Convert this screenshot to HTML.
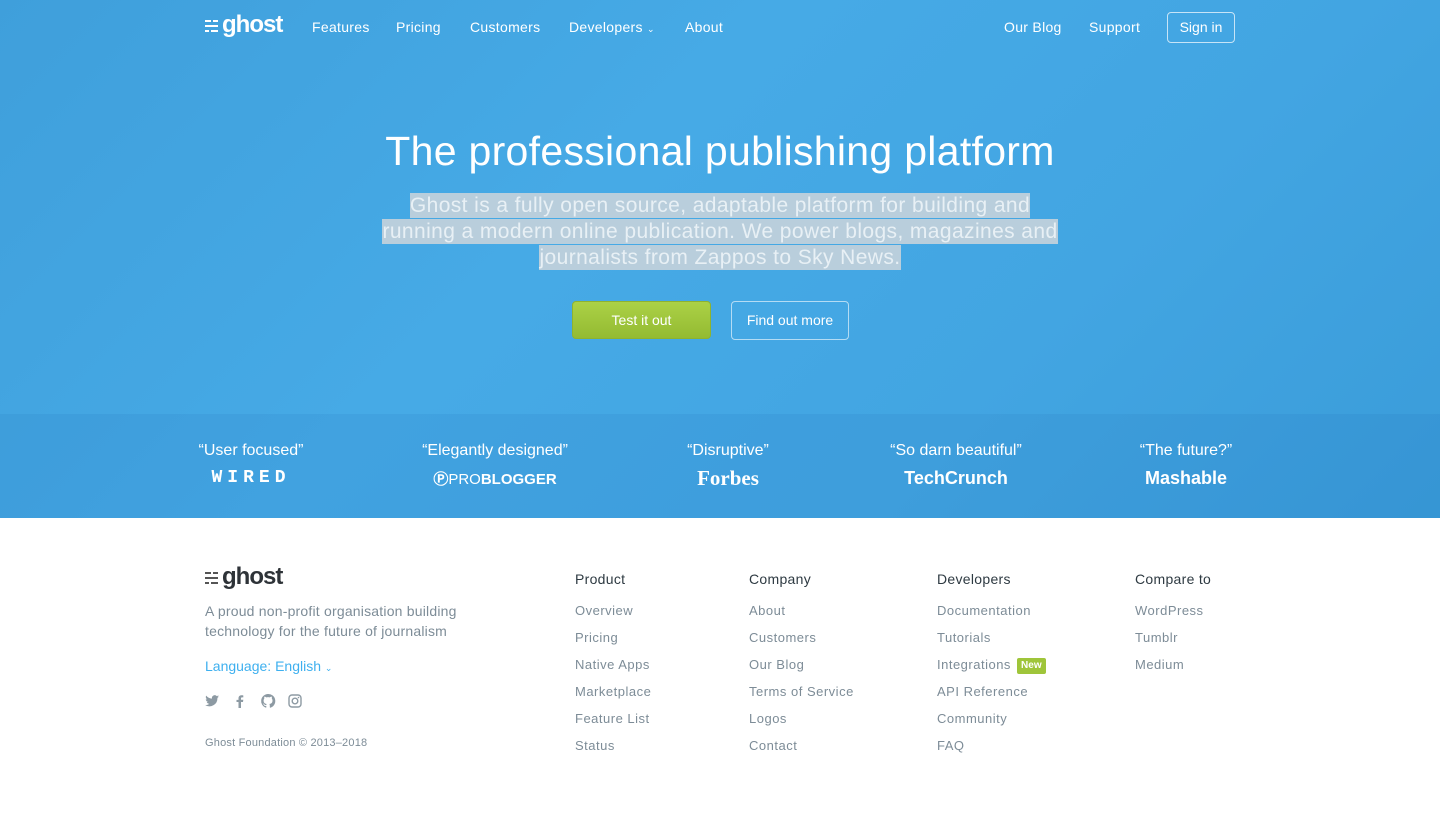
<!DOCTYPE html>
<html><head><meta charset="utf-8"><style>
*{margin:0;padding:0;box-sizing:border-box}
body{width:1440px;height:831px;overflow:hidden;font-family:"Liberation Sans",sans-serif;background:#fff;position:relative}
.hero{position:absolute;left:0;top:0;width:1440px;height:518px;background:linear-gradient(135deg,#3f9fdb 0%,#46aae6 40%,#42a5e2 70%,#3a9cd9 100%)}
.band{position:absolute;left:0;top:414px;width:1440px;height:104px;background:rgba(30,110,180,0.12)}
.a{position:absolute;white-space:nowrap}
.nav{color:#fff;font-size:14px;top:19px;letter-spacing:0.3px}
.logo{font-weight:bold;letter-spacing:-1px}
.bars span{position:absolute;height:2px}
h1{position:absolute;top:128px;left:0;width:1440px;text-align:center;color:#fff;font-weight:normal;font-size:41px;letter-spacing:0.3px}
.sub{position:absolute;left:0;width:1440px;text-align:center;font-size:21px;letter-spacing:0.4px;color:#e8f0f5}
.sub span{background:#b9cedc;padding:1px 0}
.q{color:#fff;font-size:16px;text-align:center;width:200px;top:442px}
.lg{color:#fff;font-weight:bold;text-align:center;width:200px;top:468px;font-size:18px}
.fh{font-size:14px;color:#2e3a42;top:571px;letter-spacing:0.3px}
.fl{font-size:13px;color:#7d8c97;line-height:27px;top:597px;letter-spacing:0.5px}
</style></head><body>
<div class="hero">
<div class="band"></div>
<div class="a bars" style="left:205px;top:20px;width:14px;height:14px">
<span style="left:0;top:0;width:6px;background:#fff"></span><span style="left:8px;top:0;width:5px;background:#fff"></span>
<span style="left:0;top:5px;width:13px;background:#fff"></span>
<span style="left:0;top:10px;width:4px;background:#fff"></span><span style="left:6px;top:10px;width:7px;background:#fff"></span></div>
<div class="a logo" style="left:222px;top:11px;font-size:24px;color:#fff">ghost</div>
<div class="a nav" style="left:312px">Features</div>
<div class="a nav" style="left:396px">Pricing</div>
<div class="a nav" style="left:470px">Customers</div>
<div class="a nav" style="left:569px">Developers <span style="font-size:9px">&#8964;</span></div>
<div class="a nav" style="left:685px">About</div>
<div class="a nav" style="left:1004px">Our Blog</div>
<div class="a nav" style="left:1089px">Support</div>
<div class="a" style="left:1167px;top:12px;width:68px;height:31px;border:1px solid rgba(255,255,255,.7);border-radius:4px;color:#fff;font-size:14px;text-align:center;line-height:29px">Sign in</div>
<h1>The professional publishing platform</h1>
<div class="sub" style="top:194px"><span>Ghost is a fully open source, adaptable platform for building and</span></div>
<div class="sub" style="top:220px"><span>running a modern online publication. We power blogs, magazines and</span></div>
<div class="sub" style="top:246px"><span>journalists from Zappos to Sky News.</span></div>
<div class="a" style="left:572px;top:301px;width:139px;height:38px;border-radius:4px;background:linear-gradient(#abd146,#94bb32);border:1px solid #8fb32e;color:#fff;font-size:14px;text-align:center;line-height:36px">Test it out</div>
<div class="a" style="left:731px;top:301px;width:118px;height:39px;border-radius:4px;border:1px solid rgba(255,255,255,.6);color:#fff;font-size:14px;text-align:center;line-height:37px">Find out more</div>
<div class="a q" style="left:151px">“User focused”</div>
<div class="a lg" style="left:151px;letter-spacing:5px;font-family:'Liberation Mono',monospace">WIRED</div>
<div class="a q" style="left:395px">“Elegantly designed”</div>
<div class="a lg" style="left:395px;font-size:15px">Ⓟ<span style="font-weight:normal">PRO</span>BLOGGER</div>
<div class="a q" style="left:628px">“Disruptive”</div>
<div class="a lg" style="left:628px;font-family:'Liberation Serif',serif;font-size:21px;top:466px">Forbes</div>
<div class="a q" style="left:856px">“So darn beautiful”</div>
<div class="a lg" style="left:856px">TechCrunch</div>
<div class="a q" style="left:1086px">“The future?”</div>
<div class="a lg" style="left:1086px">Mashable</div>
</div>
<div class="a bars" style="left:205px;top:572px;width:14px;height:14px">
<span style="left:0;top:0;width:6px;background:#555"></span><span style="left:8px;top:0;width:5px;background:#555"></span>
<span style="left:0;top:5px;width:13px;background:#555"></span>
<span style="left:0;top:10px;width:4px;background:#555"></span><span style="left:6px;top:10px;width:7px;background:#555"></span></div>
<div class="a logo" style="left:222px;top:563px;font-size:24px;color:#2e3338">ghost</div>
<div class="a" style="left:205px;top:601px;font-size:14px;color:#7d8c97;line-height:20px;letter-spacing:0.2px">A proud non-profit organisation building<br>technology for the future of journalism</div>
<div class="a" style="left:205px;top:658px;font-size:14px;color:#3eb0ef">Language: English <span style="font-size:9px">&#8964;</span></div>
<svg class="a" style="left:205px;top:693px" width="110" height="16" fill="#8d9aa3">
<path d="M14 3.5c-.5.2-1 .4-1.6.4.6-.3 1-.9 1.2-1.5-.5.3-1.1.5-1.8.7A2.8 2.8 0 0 0 7 5.6 8 8 0 0 1 1.2 2.6a2.8 2.8 0 0 0 .9 3.8c-.5 0-.9-.1-1.300-.3 0 1.4 1 2.5 2.2 2.8-.4.1-.8.1-1.3 0 .4 1.1 1.4 1.9 2.6 2A5.7 5.7 0 0 1 0 12a8 8 0 0 0 12.4-7.1c.6-.4 1.1-.9 1.6-1.4z"/>
<path d="M36 15V9h2l.3-2.2H36V5.4c0-.6.2-1 1-1h1.3V2.4c-.2 0-1-.1-1.8-.1-1.8 0-3 1.1-3 3.1v1.5h-2V9h2v6z"/>
<path d="M63 1a7 7 0 0 0-2.2 13.6c.3.1.5-.2.5-.4v-1.3c-2 .4-2.4-.9-2.4-.9-.3-.8-.8-1-.8-1-.6-.4.1-.4.1-.4.7 0 1.1.7 1.1.7.6 1.1 1.6.8 2 .6 0-.4.3-.8.5-.9-1.6-.2-3.2-.8-3.2-3.5 0-.8.3-1.4.7-1.9 0-.2-.3-.9.1-1.9 0 0 .6-.2 1.9.7a6.600 6.600 0 0 1 3.5 0c1.300-.9 1.900-.7 1.900-.7.4 1 .1 1.700.1 1.900.5.5.7 1.100.7 1.900 0 2.700-1.600 3.300-3.200 3.500.3.200.5.700.5 1.300v2c0 .2.2.5.5.4A7 7 0 0 0 63 1z"/>
<path fill="none" stroke="#8d9aa3" stroke-width="1.4" d="M87 2h6a3 3 0 0 1 3 3v6a3 3 0 0 1-3 3h-6a3 3 0 0 1-3-3V5a3 3 0 0 1 3-3z"/><circle cx="90" cy="8" r="2.8" fill="none" stroke="#8d9aa3" stroke-width="1.4"/><circle cx="93.5" cy="4.5" r=".8"/>
</svg>
<div class="a" style="left:205px;top:737px;font-size:11px;color:#7d8c97;letter-spacing:0.2px">Ghost Foundation © 2013–2018</div>
<div class="a fh" style="left:575px">Product</div>
<div class="a fl" style="left:575px">Overview<br>Pricing<br>Native Apps<br>Marketplace<br>Feature List<br>Status</div>
<div class="a fh" style="left:749px">Company</div>
<div class="a fl" style="left:749px">About<br>Customers<br>Our Blog<br>Terms of Service<br>Logos<br>Contact</div>
<div class="a fh" style="left:937px">Developers</div>
<div class="a fl" style="left:937px">Documentation<br>Tutorials<br>Integrations <span style="display:inline-block;background:#9fc53a;color:#fff;font-size:10px;font-weight:bold;padding:0 4px;line-height:16px;border-radius:2px;margin-left:2px;vertical-align:1px;letter-spacing:0">New</span><br>API Reference<br>Community<br>FAQ</div>
<div class="a fh" style="left:1135px">Compare to</div>
<div class="a fl" style="left:1135px">WordPress<br>Tumblr<br>Medium</div>
</body></html>
